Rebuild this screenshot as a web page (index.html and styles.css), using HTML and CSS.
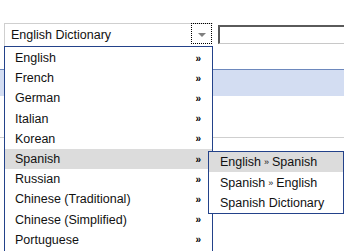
FILE: index.html
```html
<!DOCTYPE html>
<html lang="en">
    <head>
        <meta charset="UTF-8" />
        <meta name="viewport" content="width=device-width, initial-scale=1.0" />
        <title>Dictionary Picker</title>
        <link rel="stylesheet" href="styles.css">
    </head>
    <body>
        <header class="bar">
            <div class="combo">
                <span class="combo-value">English Dictionary</span>
                <span class="combo-btn"><span class="tri"></span></span>
            </div>
            <div class="field"></div>
        </header>

        <section class="band"></section>
        <hr class="rule" />

        <!-- open dropdown -->
        <ul class="menu">
            <li>English <span class="more">&raquo;</span></li>
            <li>French <span class="more">&raquo;</span></li>
            <li>German <span class="more">&raquo;</span></li>
            <li>Italian <span class="more">&raquo;</span></li>
            <li>Korean <span class="more">&raquo;</span></li>
            <li class="active">Spanish <span class="more">&raquo;</span></li>
            <li>Russian <span class="more">&raquo;</span></li>
            <li>Chinese (Traditional) <span class="more">&raquo;</span></li>
            <li>Chinese (Simplified) <span class="more">&raquo;</span></li>
            <li>Portuguese <span class="more">&raquo;</span></li>
        </ul>

        <ul class="submenu">
            <li class="active">English <span class="sep">&raquo;</span> Spanish</li>
            <li>Spanish <span class="sep">&raquo;</span> English</li>
            <li>Spanish Dictionary</li>
        </ul>
    </body>
</html>
```

FILE: styles.css
```css
body {
    font-family: "Liberation Sans", Arial, sans-serif;
    font-size: 12.5px;
    margin: 0;
    padding: 0;
    background-color: #fff;
    color: #111;
    overflow: hidden;
}

.bar {
    display: flex;
    align-items: flex-start;
    padding: 23px 0 0 4px;
}

.combo {
    display: flex;
    align-items: flex-start;
    box-sizing: border-box;
    width: 209px;
    height: 24px;
    border: 1px solid #cfcfcf;
    border-right: none;
    border-bottom: none;
}

.combo-value {
    padding: 4px 0 0 6px;
    line-height: 15px;
}

.combo-btn {
    display: flex;
    justify-content: center;
    align-items: center;
    box-sizing: border-box;
    width: 21px;
    height: 21px;
    margin: -1px 1px 0 auto;
    border: 1px dotted #000;
}

.tri {
    width: 0;
    height: 0;
    margin-top: 2px;
    border-left: 4px solid transparent;
    border-right: 4px solid transparent;
    border-top: 4px solid #808080;
}

.field {
    flex: 1;
    box-sizing: border-box;
    height: 19px;
    margin: 2px 0 0 5px;
    border-top: 2px solid #5a5a5a;
    border-left: 2px solid #5a5a5a;
    border-bottom: 1px solid #c8c8c8;
}

.band {
    height: 26px;
    margin-top: 22px;
    border-top: 1px solid #6d88bd;
    background-color: #d3ddf2;
}

.rule {
    margin: 41px 0 0 0;
    border: none;
    border-top: 1px solid #cfcfcf;
}

.menu,
.submenu {
    position: absolute;
    list-style: none;
    margin: 0;
    background-color: #fff;
    box-sizing: border-box;
}

.menu {
    top: 46px;
    left: 4px;
    width: 209px;
    height: 205px;
    padding: 1px 0 0 0;
    border: 1px solid #23428a;
    border-bottom: none;
    overflow: hidden;
}

.menu li {
    display: flex;
    justify-content: space-between;
    align-items: center;
    height: 20.2px;
    padding: 0 11px 0 10px;
}

.more {
    font-size: 10px;
    font-weight: bold;
    color: #000;
}

.active {
    background-color: #dcdcdc;
}

.submenu {
    top: 151px;
    left: 208px;
    width: 136px;
    padding: 0;
    border: 1px solid #23428a;
}

.submenu li {
    display: flex;
    align-items: center;
    height: 20.4px;
    padding: 0 0 0 11px;
}

.sep {
    font-size: 9px;
    margin: 0 3px;
}
```
